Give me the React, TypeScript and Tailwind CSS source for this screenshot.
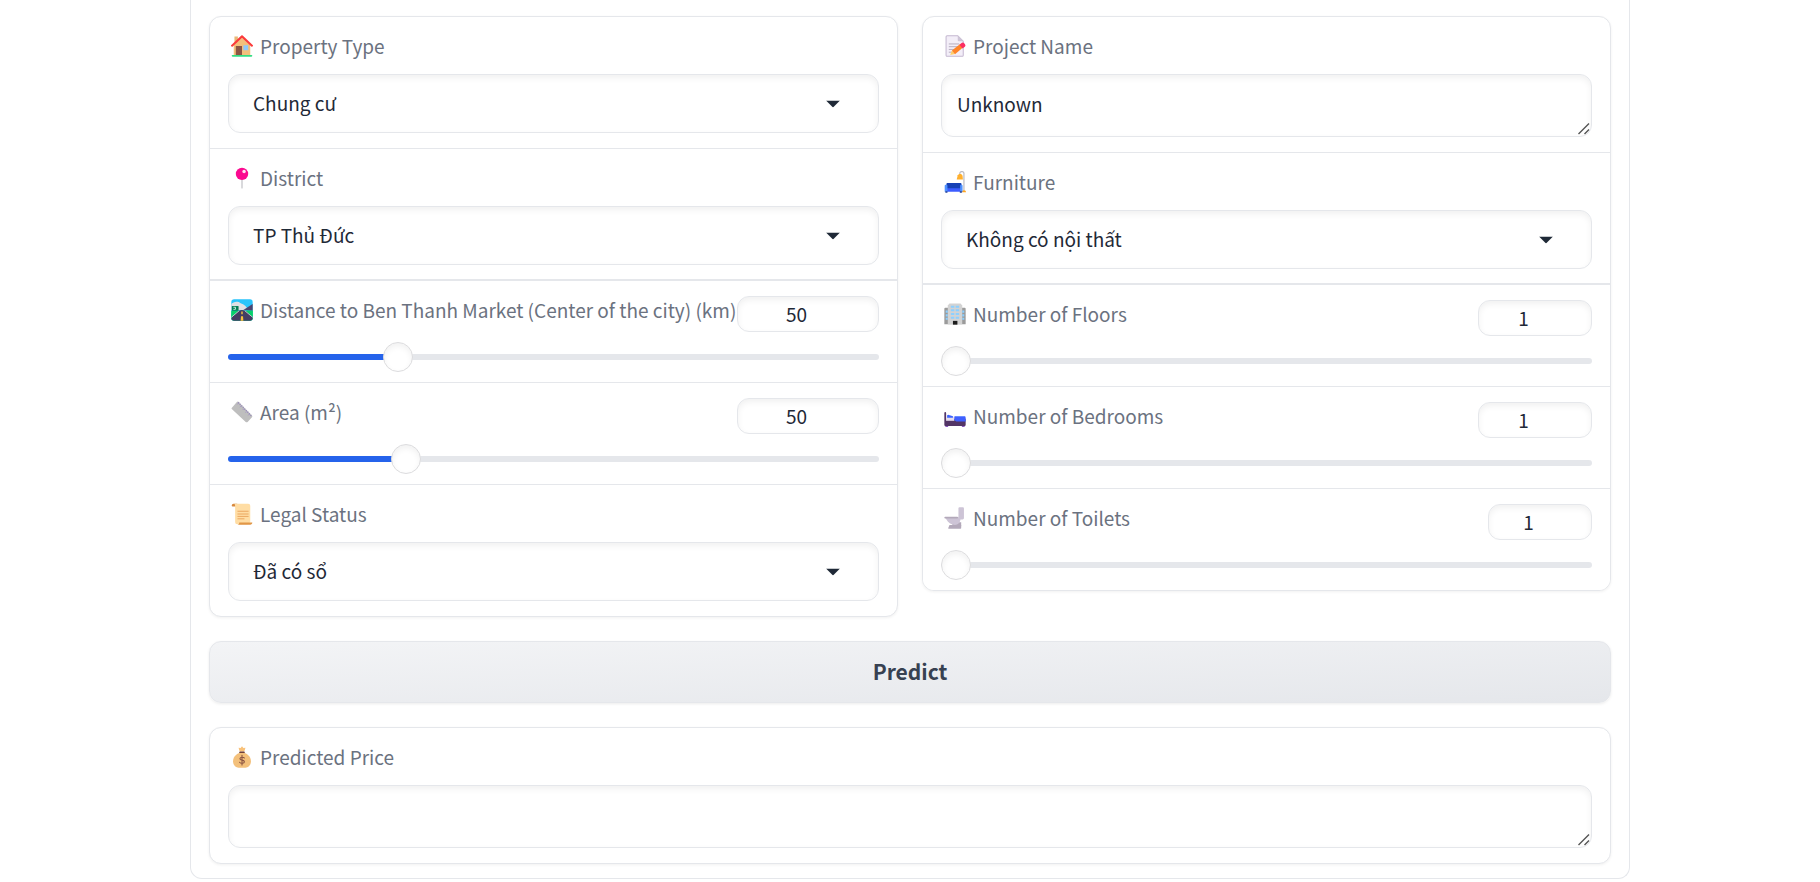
import { useId, useState } from "react";
import type { CSSProperties, ReactNode } from "react";

const fieldBox =
  "w-full rounded-xl border border-[#e5e7eb] bg-white text-[19px] text-[#1f2937] shadow-[inset_0_3px_6px_0_rgba(0,0,0,0.06)] outline-none focus:border-[#93c5fd]";

function Emoji({ children }: { children: ReactNode }) {
  return (
    <svg className="size-[22px] shrink-0" viewBox="0 0 32 32" aria-hidden="true">
      {children}
    </svg>
  );
}

const houseIcon = (
  <Emoji>
    <path d="M5 2h5v10H5z" fill="#e8b877" />
    <path d="M4 15 16 4l12 11v14H4z" fill="#f3c07b" />
    <path d="M7 16h9v13H7z" fill="#8c5543" />
    <path d="M18 15h7v7h-7z" fill="#8fc9fb" />
    <path d="M1.500 15.500 16 2l14.500 13.500" fill="none" stroke="#fb3b3b" strokeWidth="3" strokeLinecap="round" strokeLinejoin="round" />
    <rect x="1" y="29" width="30" height="2.500" rx="1.200" fill="#33dd83" />
  </Emoji>
);

const pinIcon = (
  <Emoji>
    <path d="M14.700 17h2.600v13a1.300 1.300 0 0 1-2.600 0z" fill="#d5d5d8" />
    <circle cx="16" cy="10" r="9" fill="#fb0a90" />
    <circle cx="19" cy="6.500" r="2.500" fill="#ffe0f2" />
  </Emoji>
);

const motorwayIcon = (
  <Emoji>
    <defs>
      <clipPath id="motorway-tile">
        <rect x="0.500" y="0.500" width="31" height="31" rx="4" />
      </clipPath>
    </defs>
    <g clipPath="url(#motorway-tile)">
      <path d="M0 0h32v32H0z" fill="#2ac4fb" />
      <path d="M0 8c4-5 10-5 14-2 5 1 9 5 11 10H0z" fill="#dfe0e5" />
      <path d="M18 16 32 7v10z" fill="#4b4370" />
      <path d="M0 17h32v15H0z" fill="#08d06b" />
      <path d="M0 17h11l5-1 5 1 11 10v5H0v-4l11-11z" fill="#443d63" />
      <path d="M1 17h9L0 27z" fill="#08d06b" />
      <path d="M23 17h9v9z" fill="#08d06b" />
      <path d="m0 27 12-10M32 27 20 17" stroke="#d9d9e2" strokeWidth="1.200" />
      <path d="M15 18h2v4h-2zM14.500 25h3l.5 7h-4z" fill="#f9c23c" />
      <rect x="1" y="10" width="10" height="7" rx="1" fill="#087f56" />
      <path d="M3.500 12h3v3h-3" fill="none" stroke="#e7fff5" strokeWidth="1.200" />
    </g>
  </Emoji>
);

const rulerIcon = (
  <Emoji>
    <path d="M1 10 8.500 1.500a2 2 0 0 1 2.700 0L30.500 21a2 2 0 0 1 0 2.700l-6.300 6.700a2 2 0 0 1-2.800 0L1.500 12a1.500 1.500 0 0 1-.5-2z" fill="#bebebe" />
    <path d="M10.500 2 30 22" stroke="#998eb9" strokeWidth="2.200" strokeDasharray="1.600 1.600" />
    <path d="m9 5 2-2m2 6 2-2m2 6 2-2m2 6 2-2m2 6 2-2" stroke="#a493c6" strokeWidth="1.200" />
  </Emoji>
);

const scrollIcon = (
  <Emoji>
    <path d="M1 3.500A2.800 2.800 0 0 1 4 1h5v4H2.500A1.500 1.500 0 0 1 1 3.500z" fill="#d7893e" />
    <path d="M4 1h21a3 3 0 0 1 3 3v24l-4 3H9a3 3 0 0 1-3-3V6c0-3 0-5-2-5z" fill="#ffdda4" />
    <path d="M12 28.500h19c0 2-1.300 3-3 3H10c1.500-.5 2-1.500 2-3z" fill="#e19747" />
    <path d="M10 12h15M10 16h15M10 19.500h15M10 23h9" stroke="#e8a159" strokeWidth="1.300" strokeLinecap="round" />
  </Emoji>
);

const memoIcon = (
  <Emoji>
    <path d="M4.500 1H20l8 8v20.500a1.500 1.500 0 0 1-1.500 1.500h-22A1.500 1.500 0 0 1 3 29.500v-27A1.500 1.500 0 0 1 4.500 1z" fill="#f3eef8" stroke="#c4b8d0" strokeWidth="1.500" />
    <path d="M20 1v6.500A1.500 1.500 0 0 0 21.500 9H28z" fill="#cdc4d6" />
    <path d="M7 13h15M7 17h14M7 21h8M7 25h5" stroke="#b4acbc" strokeWidth="1.400" />
    <path d="m9 29 2.500-6.500 4.500 5z" fill="#ffcf69" />
    <path d="m11.500 22.500 12-9.500 4 5L16 28z" fill="#ff8429" />
    <path d="m22.500 14 3-2.200a3 3 0 0 1 4.200.6l.8 1a3 3 0 0 1-.6 4.100l-3 2.200z" fill="#fb2e62" />
  </Emoji>
);

const couchIcon = (
  <Emoji>
    <path d="M23 6V3.500A2.500 2.500 0 0 1 25.500 1h1A2.500 2.500 0 0 1 29 3.500V30" fill="none" stroke="#b9b8bf" strokeWidth="1.700" />
    <path d="m20 6 2-1.500h3L27 7l.5 5.500h-9z" fill="#ffb02e" />
    <path d="M26 31c0-2 1-3 3-3s3 1 3 3z" fill="#ffa51f" />
    <path d="M5 17.500h19a1.500 1.500 0 0 1 1.500 1.500v8h-22v-8A1.500 1.500 0 0 1 5 17.500z" fill="#1741b5" />
    <path d="M4 25h21v5H4z" fill="#3c5cff" />
    <path d="M2.500 20h1A1.500 1.500 0 0 1 5 21.500V30H1v-8.500A1.500 1.500 0 0 1 2.500 20zM25 20h.5a1.500 1.500 0 0 1 1.500 1.500V30h-3.500v-8.500A1.500 1.500 0 0 1 25 20z" fill="#5092ff" />
    <path d="M2 29.500h3v2H2zM23 29.500h3v2h-3z" fill="#213c91" />
  </Emoji>
);

const buildingIcon = (
  <Emoji>
    <path d="M.5 8.500A1.500 1.500 0 0 1 2 7h28a1.500 1.500 0 0 1 1.500 1.500V31H.5z" fill="#9b9b9b" />
    <path d="M5.500 3.500 8 .8h16l2.500 2.700V31h-21z" fill="#d3d3d3" />
    <path d="M13 26h6.500v5.500H13z" fill="#1c1c1c" />
    <path d="M10 4h5v3h-5zm7 0h5v3h-5zM10 9h5v3h-5zm7 0h5v3h-5zM10 14.500h5v3h-5zm7 0h5v3h-5zM10 20h5v3h-5zm7 0h5v3h-5zM2.500 11h3v3h-3zm0 5.500h3v3h-3zm0 5h3v3h-3zM26.500 11h3v3h-3zm0 5.500h3v3h-3zm0 5h3v3h-3z" fill="#8dd0ff" />
  </Emoji>
);

const bedIcon = (
  <Emoji>
    <path d="M2 29h4v3H2zM26 29h4v3h-4z" fill="#8b57c3" />
    <path d="M.5 11.500a1.300 1.300 0 0 1 2.600 0V20h28.400v9a1.500 1.500 0 0 1-1.500 1.500H2A1.500 1.500 0 0 1 .5 29z" fill="#533566" />
    <path d="M3 17h12v6H3z" fill="#e5dcec" />
    <path d="M4.500 15 6 14l7 2.500V18.500h-8.500z" fill="#3d63ff" />
    <path d="M17 16h12a2.500 2.500 0 0 1 2.500 2.500V24H18l-3-2v-4a2 2 0 0 1 2-2z" fill="#3f5fff" />
    <path d="M17 16h12a2.500 2.500 0 0 1 2 1.500H15.500A2 2 0 0 1 17 16z" fill="#6b8cff" />
  </Emoji>
);

const toiletIcon = (
  <Emoji>
    <path d="M8 26h17v4.500a1 1 0 0 1-1 1H7a1 1 0 0 1-.7-1.500z" fill="#b3a9ba" />
    <path d="M12 22h13v6H11c1-2 2-3 1-6z" fill="#b3a9ba" />
    <path d="M1.500 15h22.500v2c0 5-4 9-8 9-5 0-10-3-12.500-8z" fill="#cdc4d6" />
    <rect x="0.500" y="14" width="20" height="2.800" rx="1.400" fill="#b3a9ba" />
    <path d="M21 2a1.500 1.500 0 0 1 1.500-1.500h5A1.500 1.500 0 0 1 29 2v14a2 2 0 0 1-2 2h-6z" fill="#cdc4d6" />
  </Emoji>
);

const moneyIcon = (
  <Emoji>
    <path d="m12 6-1-3.500 3 .5 2-2.500 2 2.500 3-.5-1 3.500-1 2h-6z" fill="#f9c27a" />
    <path d="M12.500 8h7l1 3h-9z" fill="#6e3f3a" />
    <path d="M12 10h8c5 2 9 6 9 12 0 6-4 9.500-8 9.500H11c-4 0-8-3.500-8-9.500 0-6 4-10 9-12z" fill="#f3c07b" />
    <path d="M19.500 17.500c-1-1.500-6-2-6.500.8-.4 3 6.500 1.500 6.500 4.500 0 3-5.500 3-7 .8M16 13.500v14" fill="none" stroke="#8c5543" strokeWidth="1.600" strokeLinecap="round" />
  </Emoji>
);

function FieldLabel({ id, icon, text }: { id: string; icon: ReactNode; text: string }) {
  return (
    <label htmlFor={id} className="flex h-7 items-center gap-[7px] pl-[3px] whitespace-nowrap text-[#6b7280]">
      {icon}
      <span>{text}</span>
    </label>
  );
}

function SelectField({ icon, text, options }: { icon: ReactNode; text: string; options: string[] }) {
  const id = useId();
  return (
    <div className="flex flex-col gap-3.5 px-[18px] py-[15px]">
      <FieldLabel id={id} icon={icon} text={text} />
      <div className="relative">
        <select id={id} className={`${fieldBox} block h-[59px] appearance-none pr-16 pb-0.5 pl-6`}>
          {options.map((option) => (
            <option key={option}>{option}</option>
          ))}
        </select>
        <svg
          className="pointer-events-none absolute top-1/2 right-[39px] h-[7px] w-[14px] -translate-y-1/2"
          viewBox="0 0 14 7"
          aria-hidden="true"
        >
          <path d="M0 0h14L7 7z" fill="#1f2937" />
        </svg>
      </div>
    </div>
  );
}

function TextField({ icon, text, initial }: { icon: ReactNode; text: string; initial: string }) {
  const id = useId();
  return (
    <div className="flex flex-col gap-3.5 px-[18px] py-[15px]">
      <FieldLabel id={id} icon={icon} text={text} />
      <div className="relative">
        <textarea
          id={id}
          rows={1}
          defaultValue={initial}
          className={`${fieldBox} block h-[63px] resize-y px-[15px] py-[15px] leading-7 [&::-webkit-resizer]:bg-transparent`}
        />
        <svg
          className="pointer-events-none absolute right-0.5 bottom-0.5 size-3"
          viewBox="0 0 12 12"
          aria-hidden="true"
        >
          <path d="M.5 11 11 .5M6.500 11 11 6.500" stroke="#555555" strokeWidth="1.400" />
        </svg>
      </div>
    </div>
  );
}

type SliderProps = {
  icon: ReactNode;
  text: string;
  min: number;
  max: number;
  initial: number;
  boxWidth: string;
};

function SliderField({ icon, text, min, max, initial, boxWidth }: SliderProps) {
  const id = useId();
  const [value, setValue] = useState(initial);
  const fill = { "--fill": `${((value - min) / (max - min)) * 100}%` } as CSSProperties;
  return (
    <div className="px-[18px] pt-[15px] pb-2.5">
      <div className="flex items-start justify-between">
        <FieldLabel id={id} icon={icon} text={text} />
        <div className={`shrink-0 ${boxWidth}`}>
          <input
            id={id}
            type="number"
            min={min}
            max={max}
            value={value}
            onChange={(event) => setValue(Number(event.target.value))}
            className={`${fieldBox} block h-9 [appearance:textfield] pr-[39px] pb-0.5 pl-4 text-center [&::-webkit-inner-spin-button]:appearance-none`}
          />
        </div>
      </div>
      <input
        type="range"
        aria-label={text}
        min={min}
        max={max}
        value={value}
        onChange={(event) => setValue(Number(event.target.value))}
        style={fill}
        className="mt-2.5 block h-[30px] w-full cursor-pointer appearance-none bg-transparent [&::-webkit-slider-runnable-track]:h-1.5 [&::-webkit-slider-runnable-track]:rounded-full [&::-webkit-slider-runnable-track]:bg-[linear-gradient(to_right,#2563eb_var(--fill),#e5e7eb_var(--fill))] [&::-webkit-slider-thumb]:-mt-3 [&::-webkit-slider-thumb]:size-[30px] [&::-webkit-slider-thumb]:appearance-none [&::-webkit-slider-thumb]:rounded-full [&::-webkit-slider-thumb]:border [&::-webkit-slider-thumb]:border-[#dcdcde] [&::-webkit-slider-thumb]:bg-white [&::-webkit-slider-thumb]:shadow-[inset_0_3px_6px_0_rgba(0,0,0,0.06)]"
      />
    </div>
  );
}

const card =
  "min-w-0 divide-y divide-[#e5e7eb] overflow-hidden rounded-xl border border-[#e5e7eb] bg-white shadow-[0_1px_3px_0_rgba(0,0,0,0.06)]";
const sliderGroup = "-mt-0.5 divide-y divide-[#e5e7eb] border-t-2 border-[#e5e7eb] bg-white";

export default function App() {
  return (
    <div className="min-h-screen bg-white font-['Source_Sans_Pro','Noto_Sans_CJK_SC','Noto_Sans',sans-serif] text-[19px] leading-7 text-[#1f2937]">
      <main className="mx-auto flex max-w-[1440px] flex-col gap-6 rounded-b-xl border border-t-0 border-[#e5e7eb] px-[18px] pt-4 pb-3.5">
        <div className="grid items-start gap-6 md:grid-cols-2">
          <section className={card}>
            <SelectField icon={houseIcon} text="Property Type" options={["Chung cư"]} />
            <SelectField icon={pinIcon} text="District" options={["TP Thủ Đức"]} />
            <div className={sliderGroup}>
              <SliderField icon={motorwayIcon} text="Distance to Ben Thanh Market (Center of the city) (km)" min={0} max={200} initial={50} boxWidth="w-[142px]" />
              <SliderField icon={rulerIcon} text="Area (m²)" min={18} max={140} initial={50} boxWidth="w-[142px]" />
            </div>
            <SelectField icon={scrollIcon} text="Legal Status" options={["Đã có sổ"]} />
          </section>
          <section className={card}>
            <TextField icon={memoIcon} text="Project Name" initial="Unknown" />
            <SelectField icon={couchIcon} text="Furniture" options={["Không có nội thất"]} />
            <div className={sliderGroup}>
              <SliderField icon={buildingIcon} text="Number of Floors" min={1} max={100} initial={1} boxWidth="w-[114px]" />
              <SliderField icon={bedIcon} text="Number of Bedrooms" min={1} max={100} initial={1} boxWidth="w-[114px]" />
              <SliderField icon={toiletIcon} text="Number of Toilets" min={1} max={10} initial={1} boxWidth="w-[104px]" />
            </div>
          </section>
        </div>
        <button
          type="button"
          className="h-[62px] rounded-xl border border-[#e5e7eb] bg-linear-to-br from-[#f3f4f6] to-[#e5e7eb] pb-0.5 text-[21px] font-semibold text-[#374151] shadow-[0_1px_3px_0_rgba(0,0,0,0.08)]"
        >
          Predict
        </button>
        <section className={card}>
          <TextField icon={moneyIcon} text="Predicted Price" initial="" />
        </section>
      </main>
    </div>
  );
}
